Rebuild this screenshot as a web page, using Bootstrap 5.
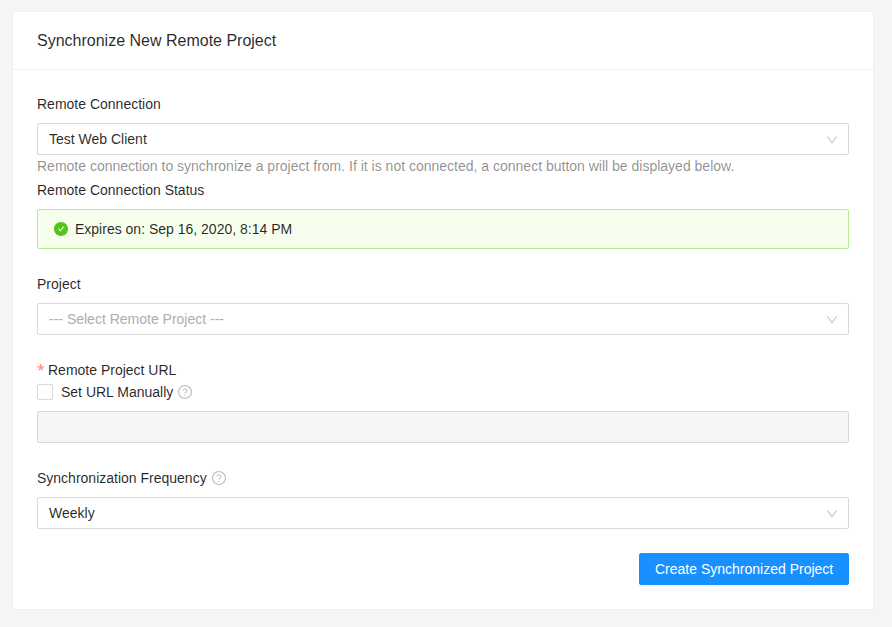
<!DOCTYPE html>
<html lang="en">
<head>
<meta charset="utf-8">
<meta name="viewport" content="width=device-width, initial-scale=1">
<title>Synchronize New Remote Project</title>
<link href="https://cdn.jsdelivr.net/npm/bootstrap@5.3.0/dist/css/bootstrap.min.css" rel="stylesheet">
<style>
body{background:#f5f5f5;font-family:"Liberation Sans",Arial,sans-serif;font-size:14px;line-height:22px;color:rgba(0,0,0,.85);padding:11px 18px 0 12px}
.sync-card{border:1px solid #f0f0f0;border-radius:2px;height:599px;color:inherit}
.sync-head{padding:1px 24px 0;border-bottom:1px solid #f0f0f0;font-size:16px;background:#fff;box-sizing:content-box;height:57px}
.sync-body{padding:23px 24px 24px}
.sync-label{height:22px;margin-bottom:8px;font-size:14px}
.sync-control{height:32px;border:1px solid #d9d9d9;border-radius:2px;padding:0 10px 0 11px;background:#fff;cursor:pointer}
.sync-control svg{color:rgba(0,0,0,.25);margin-top:2px}
.sync-help{color:rgba(0,0,0,.45);height:24px}
.sync-hint{color:rgba(0,0,0,.25);margin-left:5px}
.sync-placeholder{color:#aeaeae}
.sync-status{height:40px;border:1px solid #b7eb8f;border-radius:2px;background:#f6ffed;color:inherit;padding:0 16px 0 15px}
.sync-status svg{margin-left:1px;margin-right:7px}
.sync-star{color:#ff7875;font-family:"Open Sans",sans-serif;font-size:14px;line-height:1;width:7px;margin-right:4px}
.sync-check{width:16px;height:16px;border-radius:2px!important;border-color:#d9d9d9;margin:0}
.sync-url{height:32px;border-radius:2px;border-color:#d9d9d9;background:#f5f5f5!important}
.sync-btn{--bs-btn-bg:#1890ff;--bs-btn-border-color:#1890ff;--bs-btn-font-size:14px;--bs-btn-line-height:22px;--bs-btn-border-radius:2px;--bs-btn-padding-x:15px;--bs-btn-padding-y:4px;height:32px;width:210px;white-space:nowrap;box-shadow:0 2px 0 rgba(0,0,0,.043)}
.gap-block{margin-bottom:24px}
</style>
</head>
<body>
<svg class="d-none">
<symbol id="chevron" viewBox="64 64 896 896"><path fill="currentColor" d="M884 256h-75c-5.100 0-9.900 2.500-12.900 6.600L512 654.200 227.900 262.600c-3-4.100-7.800-6.600-12.900-6.600h-75c-6.500 0-10.300 7.400-6.500 12.700l352.600 486.100c12.800 17.600 39 17.600 51.700 0l352.600-486.100c3.900-5.300.1-12.700-6.400-12.700z"/></symbol>
<symbol id="question" viewBox="64 64 896 896"><path fill="currentColor" d="M512 64C264.600 64 64 264.600 64 512s200.600 448 448 448 448-200.600 448-448S759.400 64 512 64zm0 820c-205.400 0-372-166.600-372-372s166.600-372 372-372 372 166.600 372 372-166.600 372-372 372z"/><path fill="currentColor" d="M623.600 316.700C593.600 290.400 554 276 512 276s-81.600 14.500-111.600 40.700C369.200 344 352 380.700 352 420v7.600c0 4.400 3.600 8 8 8h48c4.400 0 8-3.600 8-8V420c0-44.100 43.100-80 96-80s96 35.900 96 80c0 31.100-22 59.600-56.100 72.700-21.200 8.100-39.200 22.300-52.100 40.900-13.100 19-19.900 41.800-19.900 64.900V620c0 4.400 3.600 8 8 8h48c4.400 0 8-3.600 8-8v-22.700a48.300 48.300 0 0 1 30.900-44.800c59-22.700 97.100-74.700 97.100-132.500.1-39.300-17.100-76-48.300-103.300zM472 732a40 40 0 1 0 80 0 40 40 0 1 0-80 0z"/></symbol>
</svg>
<main class="card sync-card">
<header class="card-header sync-head d-flex align-items-center">Synchronize New Remote Project</header>
<form class="card-body sync-body">
<div class="sync-label">Remote Connection</div>
<div class="sync-control d-flex align-items-center justify-content-between"><span>Test Web Client</span><svg width="12" height="12"><use href="#chevron"/></svg></div>
<div class="sync-help">Remote connection to synchronize a project from. If it is not connected, a connect button will be displayed below.</div>
<div class="sync-label">Remote Connection Status</div>
<div class="alert sync-status d-flex align-items-center gap-block"><svg width="14" height="14" viewBox="64 64 896 896"><path fill="#52c41a" d="M512 64C264.600 64 64 264.600 64 512s200.600 448 448 448 448-200.600 448-448S759.400 64 512 64zm193.500 301.700l-210.600 292a31.800 31.800 0 0 1-51.700 0L318.500 484.900c-3.800-5.300 0-12.700 6.500-12.700h46.900c10.200 0 19.900 4.900 25.900 13.300l71.200 98.800 157.200-218c6-8.300 15.600-13.300 25.900-13.300H699c6.500 0 10.300 7.400 6.500 12.700z"/></svg>Expires on: Sep 16, 2020, 8:14 PM</div>
<div class="sync-label">Project</div>
<div class="sync-control d-flex align-items-center justify-content-between gap-block"><span class="sync-placeholder">--- Select Remote Project ---</span><svg width="12" height="12"><use href="#chevron"/></svg></div>
<div class="sync-label mb-0 d-flex align-items-center"><span class="sync-star">*</span>Remote Project URL</div>
<div class="sync-label d-flex align-items-center"><input class="form-check-input sync-check" id="manual" type="checkbox"><label class="ms-2" for="manual">Set URL Manually</label><svg class="sync-hint" width="14" height="14"><use href="#question"/></svg></div>
<input class="form-control sync-url gap-block" aria-label="Remote Project URL" disabled>
<div class="sync-label d-flex align-items-center"><span>Synchronization Frequency</span><svg class="sync-hint" width="14" height="14"><use href="#question"/></svg></div>
<div class="sync-control d-flex align-items-center justify-content-between gap-block"><span>Weekly</span><svg width="12" height="12"><use href="#chevron"/></svg></div>
<div class="d-flex justify-content-end"><button class="btn btn-primary sync-btn" type="button">Create Synchronized Project</button></div>
</form>
</main>
<script src="https://cdn.jsdelivr.net/npm/bootstrap@5.3.0/dist/js/bootstrap.bundle.min.js"></script>
</body>
</html>
